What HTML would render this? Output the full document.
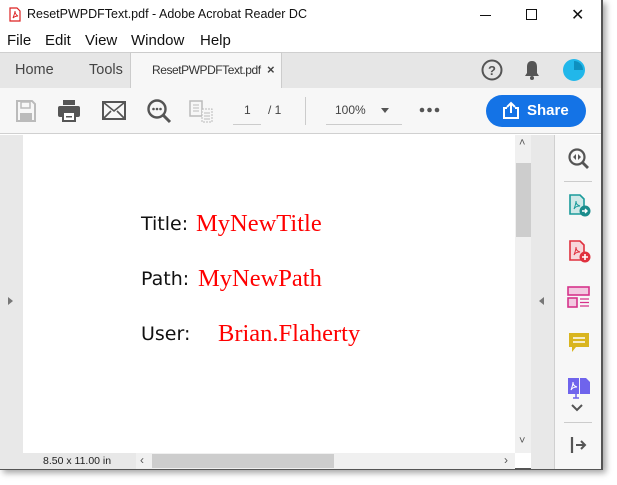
<!DOCTYPE html>
<html><head><meta charset="utf-8"><style>
*{margin:0;padding:0;box-sizing:border-box}
body{width:617px;height:485px;background:#fff;position:relative;overflow:hidden;font-family:"Liberation Sans",sans-serif;color:#222}
.win{position:absolute;left:0;top:0;width:603px;height:470px;background:#fff;border-right:2px solid #555;border-bottom:2px solid #555;box-shadow:3px 3px 6px rgba(0,0,0,.35)}
.abs{position:absolute}
.t{font-size:13px;white-space:nowrap}
.m{position:absolute;top:32px;font-size:15px;color:#111;white-space:nowrap}
.lab{position:absolute;font-size:19px;color:#111;font-family:'DejaVu Sans',sans-serif;white-space:nowrap}
.red{position:absolute;font-size:24.5px;color:#f00;font-family:'Liberation Serif',serif;white-space:nowrap}
</style></head><body>
<div class="win">
 <svg class="abs" style="left:9px;top:7px" width="12" height="15" viewBox="0 0 12 15"><path d="M1 1h7l3 3v10H1z" fill="#fff" stroke="#d22" stroke-width="1.2"/><path d="M4 11c1-3 2-5 2-7 0 2 1 4 3 5-2 0-4 1-5 2z" fill="none" stroke="#d22" stroke-width=".9"/></svg>
 <div class="abs t" style="left:27px;top:7px;font-size:12.5px;color:#111">ResetPWPDFText.pdf - Adobe Acrobat Reader DC</div>
 <div class="abs" style="left:480px;top:15px;width:11px;height:1px;background:#111"></div>
 <div class="abs" style="left:526px;top:9px;width:11px;height:11px;border:1px solid #111"></div>
 <div class="abs t" style="left:571px;top:5px;font-size:16px;color:#111">✕</div>
 <div class="m" style="left:7px">File</div>
 <div class="m" style="left:45px">Edit</div>
 <div class="m" style="left:85px">View</div>
 <div class="m" style="left:131px">Window</div>
 <div class="m" style="left:200px">Help</div>
 <div class="abs" style="left:0;top:52px;width:601px;height:36px;background:#e6e6e6;border-top:1px solid #cfcfcf"></div>
 <div class="abs" style="left:130px;top:52px;width:152px;height:37px;background:#f7f7f7;border-left:1px solid #ccc;border-right:1px solid #ccc;border-top:1px solid #ccc"></div>
 <div class="abs t" style="left:15px;top:62px;font-size:14.5px;color:#444">Home</div>
 <div class="abs t" style="left:89px;top:62px;font-size:14.5px;color:#444">Tools</div>
 <div class="abs t" style="left:152px;top:63px;font-size:12px;letter-spacing:-0.45px;color:#333">ResetPWPDFText.pdf</div>
 <div class="abs t" style="left:267px;top:62px;font-size:13px;color:#444;font-weight:bold">×</div>
 <svg class="abs" style="left:480px;top:58px" width="24" height="24"><circle cx="12" cy="12" r="9.5" fill="none" stroke="#555" stroke-width="2"/><text x="12" y="17" font-size="13" font-weight="bold" text-anchor="middle" fill="#555" font-family="Liberation Sans">?</text></svg>
 <svg class="abs" style="left:523px;top:58px" width="18" height="24"><path d="M9 3c-4 0-5 3-5 6v6l-2 3h14l-2-3V9c0-3-1-6-5-6z" fill="#555"/><circle cx="9" cy="20" r="2" fill="#555"/></svg>
 <svg class="abs" style="left:561px;top:57px" width="26" height="26"><circle cx="13" cy="13" r="11" fill="#21b7ea"/><path d="M13 4a9 9 0 0 1 9 9H13z" fill="#0e8fbf"/></svg>
 <div class="abs" style="left:0;top:88px;width:601px;height:46px;background:#f7f7f7;border-bottom:1px solid #d0d0d0"></div>
 <svg class="abs" style="left:14px;top:99px" width="24" height="24"><path d="M3 2h15l3 3v17H3z" fill="none" stroke="#bbb" stroke-width="2"/><rect x="7" y="3" width="9" height="6" fill="none" stroke="#bbb" stroke-width="1.5"/><rect x="6" y="14" width="12" height="7" fill="#bbb"/></svg>
 <svg class="abs" style="left:57px;top:99px" width="24" height="24"><rect x="6" y="1" width="12" height="5" fill="#555"/><rect x="1" y="7" width="22" height="11" rx="2" fill="#555"/><rect x="6" y="13" width="12" height="9" fill="#fff" stroke="#555" stroke-width="2"/><rect x="9" y="17" width="6" height="1.5" fill="#555"/></svg>
 <svg class="abs" style="left:102px;top:101px" width="24" height="20"><rect x="1" y="1" width="22" height="17" fill="none" stroke="#555" stroke-width="2"/><path d="M1 1l11 9 11-9M1 18l8-8M23 18l-8-8" fill="none" stroke="#555" stroke-width="1.6"/></svg>
 <svg class="abs" style="left:146px;top:98px" width="26" height="26"><circle cx="11" cy="11" r="8.5" fill="none" stroke="#555" stroke-width="2.4"/><path d="M17 17l7 7" stroke="#555" stroke-width="3"/><circle cx="7.5" cy="11" r="1.3" fill="#555"/><circle cx="11" cy="11" r="1.3" fill="#555"/><circle cx="14.5" cy="11" r="1.3" fill="#555"/></svg>
 <svg class="abs" style="left:189px;top:100px" width="26" height="24"><rect x="1" y="1" width="12" height="15" fill="none" stroke="#bbb" stroke-width="1.5"/><path d="M4 5h6M4 8h6M4 11h6" stroke="#bbb"/><rect x="13" y="9" width="10" height="13" fill="#f7f7f7" stroke="#bbb" stroke-dasharray="2 1"/><path d="M15 13h6M15 16h6M15 19h6" stroke="#bbb"/></svg>
 <div class="abs" style="left:233px;top:124px;width:28px;height:1px;background:#ccc"></div>
 <div class="abs t" style="left:244px;top:103px;font-size:12px;color:#444">1</div>
 <div class="abs t" style="left:268px;top:103px;font-size:12px;color:#444">/ 1</div>
 <div class="abs" style="left:305px;top:97px;width:1px;height:28px;background:#ccc"></div>
 <div class="abs t" style="left:335px;top:103px;font-size:12px;color:#444">100%</div>
 <div class="abs" style="left:381px;top:108px;border-left:4px solid transparent;border-right:4px solid transparent;border-top:5px solid #555"></div>
 <div class="abs" style="left:326px;top:124px;width:76px;height:1px;background:#ccc"></div>
 <svg class="abs" style="left:419px;top:107px" width="22" height="6"><circle cx="3" cy="3" r="2.3" fill="#555"/><circle cx="10.5" cy="3" r="2.3" fill="#555"/><circle cx="18" cy="3" r="2.3" fill="#555"/></svg>
 <div class="abs" style="left:486px;top:95px;width:100px;height:32px;border-radius:16px;background:#1473e6"></div>
 <svg class="abs" style="left:502px;top:101px" width="18" height="19"><path d="M5 7H2v10h14V7h-3" fill="none" stroke="#fff" stroke-width="2"/><path d="M9 12V2M5 6l4-4 4 4" fill="none" stroke="#fff" stroke-width="2"/></svg>
 <div class="abs t" style="left:527px;top:102px;font-size:15px;color:#fff;font-weight:bold">Share</div>
 <div class="abs" style="left:0;top:135px;width:23px;height:334px;background:#e8e8e8"></div>
 <div class="abs" style="left:8px;top:297px;border-top:4px solid transparent;border-bottom:4px solid transparent;border-left:5px solid #777"></div>
 <div class="lab" style="left:141px;top:213px">Title:</div>
 <div class="red" style="left:196px;top:210px">MyNewTitle</div>
 <div class="lab" style="left:141px;top:268px">Path:</div>
 <div class="red" style="left:198px;top:265px">MyNewPath</div>
 <div class="lab" style="left:141px;top:323px">User:</div>
 <div class="red" style="left:218px;top:320px">Brian.Flaherty</div>
 <div class="abs" style="left:515px;top:135px;width:16px;height:318px;background:#f0f0f0"></div>
 <div class="abs" style="left:516px;top:163px;width:15px;height:74px;background:#cdcdcd"></div>
 <div class="abs t" style="left:519px;top:137px;font-size:11px;color:#555">˄</div>
 <div class="abs t" style="left:519px;top:435px;font-size:11px;color:#555">˅</div>
 <div class="abs" style="left:23px;top:453px;width:113px;height:16px;background:#e8e8e8"></div>
 <div class="abs t" style="left:43px;top:455px;font-size:10.5px;color:#222">8.50 x 11.00 in</div>
 <div class="abs" style="left:136px;top:453px;width:379px;height:16px;background:#f0f0f0"></div>
 <div class="abs" style="left:152px;top:454px;width:182px;height:14px;background:#cdcdcd"></div>
 <div class="abs t" style="left:140px;top:453px;font-size:12px;color:#555">‹</div>
 <div class="abs t" style="left:504px;top:453px;font-size:12px;color:#555">›</div>
 <div class="abs" style="left:531px;top:135px;width:24px;height:334px;background:#e8e8e8;border-right:1px solid #d0d0d0"></div>
 <div class="abs" style="left:539px;top:297px;border-top:4px solid transparent;border-bottom:4px solid transparent;border-right:5px solid #777"></div>
 <div class="abs" style="left:555px;top:135px;width:46px;height:334px;background:#f7f7f7"></div>
 <svg class="abs" style="left:567px;top:147px" width="24" height="24"><circle cx="10" cy="10" r="7.5" fill="none" stroke="#555" stroke-width="2.2"/><path d="M15 15l6 6" stroke="#555" stroke-width="2.8"/><path d="M9 7l-3 3 3 3zM11 7l3 3-3 3z" fill="#555"/></svg>
 <div class="abs" style="left:564px;top:181px;width:28px;height:1px;background:#ccc"></div>
 <svg class="abs" style="left:568px;top:194px" width="24" height="24"><path d="M2 1h10l4 4v15H2z" fill="#cfe9e8" stroke="#1a9b9b" stroke-width="1.6"/><path d="M6 15c1-3 2-5 2-8 0 3 1 4 4 5-3 0-5 1-6 3z" fill="none" stroke="#1a9b9b"/><circle cx="17" cy="17" r="5.5" fill="#1a8c8c"/><path d="M14 17h5M17 15l2 2-2 2" stroke="#fff" stroke-width="1.4" fill="none"/></svg>
 <svg class="abs" style="left:568px;top:240px" width="24" height="24"><path d="M2 1h10l4 4v15H2z" fill="#f7d6da" stroke="#e0303e" stroke-width="1.6"/><path d="M6 15c1-3 2-5 2-8 0 3 1 4 4 5-3 0-5 1-6 3z" fill="none" stroke="#e0303e"/><circle cx="17" cy="17" r="5.5" fill="#e0303e"/><path d="M14 17h6M17 14v6" stroke="#fff" stroke-width="1.6"/></svg>
 <svg class="abs" style="left:567px;top:286px" width="24" height="22"><rect x="1" y="1" width="21" height="8" fill="#f2c9e0" stroke="#d6338a" stroke-width="1.6"/><rect x="1" y="12" width="9" height="9" fill="#f2c9e0" stroke="#d6338a" stroke-width="1.6"/><path d="M13 13h9M13 16.5h9M13 20h9" stroke="#d6338a" stroke-width="1.3"/></svg>
 <svg class="abs" style="left:568px;top:332px" width="22" height="22"><path d="M1 1h20v14H8l-4 5v-5H1z" fill="#d9b51f"/><path d="M5 6h12M5 10h12" stroke="#fff" stroke-width="1.6"/></svg>
 <svg class="abs" style="left:567px;top:377px" width="24" height="22"><path d="M1 1h11v16H1z" fill="#6f64ec"/><path d="M13 1h6l4 4v12H13z" fill="#6f64ec"/><path d="M4 13c1-3 2-5 2-8 0 3 1 4 4 5-3 0-5 1-6 3z" fill="none" stroke="#fff"/><path d="M9 17v4M6 21h6" stroke="#6f64ec" stroke-width="1.5"/></svg>
 <svg class="abs" style="left:570px;top:403px" width="14" height="10"><path d="M2 2l5 5 5-5" fill="none" stroke="#555" stroke-width="2"/></svg>
 <div class="abs" style="left:564px;top:422px;width:28px;height:1px;background:#ccc"></div>
 <svg class="abs" style="left:570px;top:436px" width="18" height="18"><path d="M2 1v16" stroke="#555" stroke-width="2.2"/><path d="M6 9h9M11 5l4 4-4 4" fill="none" stroke="#555" stroke-width="2"/></svg>
</div>
</body></html>
